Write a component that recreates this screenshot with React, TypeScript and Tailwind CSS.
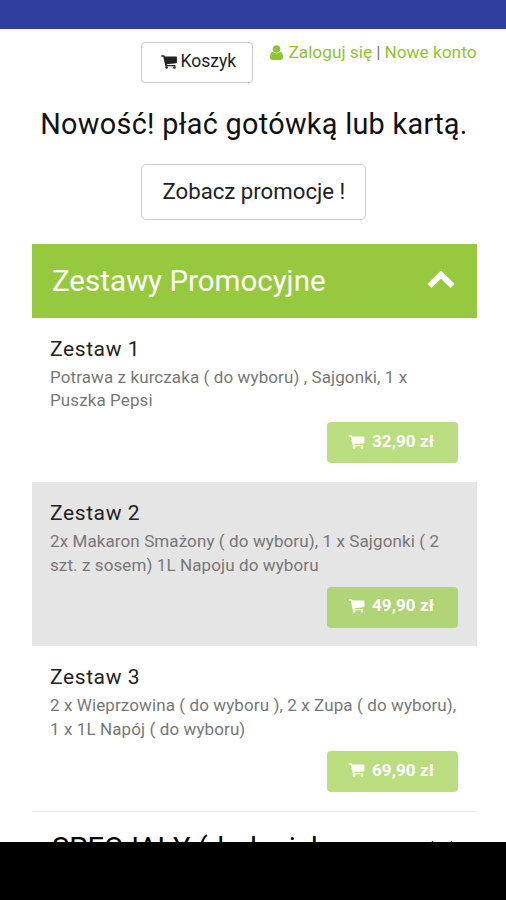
type MealSet = {
  name: string;
  lines: string[];
  price: string;
};

const sets: MealSet[] = [
  {
    name: 'Zestaw 1',
    lines: ['Potrawa z kurczaka ( do wyboru) , Sajgonki, 1 x', 'Puszka Pepsi'],
    price: '32,90 zł',
  },
  {
    name: 'Zestaw 2',
    lines: ['2x Makaron Smażony ( do wyboru), 1 x Sajgonki ( 2', 'szt. z sosem) 1L Napoju do wyboru'],
    price: '49,90 zł',
  },
  {
    name: 'Zestaw 3',
    lines: ['2 x Wieprzowina ( do wyboru ), 2 x Zupa ( do wyboru),', '1 x 1L Napój ( do wyboru)'],
    price: '69,90 zł',
  },
];

const CartIcon = ({ className }: { className: string }) => (
  <svg viewBox="0 0 17 15" fill="currentColor" className={className}>
    <path d="M0 1Q0 0.3 0.6 0.3H3.4L4.1 1.6H16.3Q17 1.6 17 2.4V8Q17 8.7 16.2 8.9L6.2 10L6.4 10.7H15.4V12H4.6L4.4 11L2.4 1.8H0.6Q0 1.8 0 1Z" />
    <circle cx="5.9" cy="13.4" r="1.4" />
    <circle cx="14.4" cy="13.4" r="1.4" />
  </svg>
);

const UserIcon = ({ className }: { className: string }) => (
  <svg viewBox="0 0 13 15" fill="currentColor" className={className}>
    <circle cx="6.5" cy="4" r="3.8" />
    <path d="M3 6.8C1 7.2 0 9 0 12.2C0 14 1 15 2.5 15H10.5C12 15 13 14 13 12.2C13 9 12 7.2 10 6.8C8 8.8 5 8.8 3 6.8Z" />
  </svg>
);

const Chevron = ({ className }: { className: string }) => (
  <svg viewBox="0 0 28 19" className={className} fill="none" stroke="currentColor" strokeWidth="5.8">
    <path d="M2.4 16 14 4.6 25.6 16" />
  </svg>
);

const SetRow = ({ item, shaded }: { item: MealSet; shaded: boolean }) => (
  <article className={`h-[164.2px] pl-[18.5px] pr-[18.5px] pt-[18px] ${shaded ? 'bg-[#e5e5e5]' : ''}`}>
    <h3 className="text-[21px] leading-[26px] tracking-[0.6px] text-[#222]">{item.name}</h3>
    <p className="mt-[4px] whitespace-nowrap text-[17px] leading-[23.5px] tracking-[0.1px] text-[#777]">
      {item.lines.map((line) => (
        <span key={line} className="block">{line}</span>
      ))}
    </p>
    <div className="mt-[9.4px] flex justify-end">
      <button
        className={`flex h-[41px] w-[131px] items-center rounded-[4px] pb-[2px] pl-[21px] text-[17px] font-bold tracking-[0.1px] text-white ${
          shaded ? 'bg-[#b0d576]' : 'bg-[#badd80]'
        }`}
      >
        <CartIcon className="mr-[7px] h-[14px] w-[17px]" />
        {item.price}
      </button>
    </div>
  </article>
);

const App = () => (
  <div className="flex h-[900px] w-[506px] flex-col overflow-hidden bg-white font-[Roboto,sans-serif] text-[#222]">
    <div className="h-[29px] shrink-0 bg-[#303f9f]" />

    <main className="min-h-0 flex-1 overflow-hidden pl-[31.5px] pr-[29.5px]">
      <header className="flex h-[54px] justify-end pt-[13px]">
        <button className="flex h-[41px] w-[112px] shrink-0 items-center justify-center rounded-[4px] border border-[#ccc] pb-[2px] pl-[2px] text-[17.5px]">
          <CartIcon className="mr-[4px] h-[14px] w-[16px]" />
          Koszyk
        </button>
        <div className="ml-[17px] flex h-[21px] items-center whitespace-nowrap text-[17.3px] text-[#8fc430]">
          <UserIcon className="mr-[5px] h-[15px] w-[13px]" />
          <a>Zaloguj się</a>
          <span className="mx-1 text-[#777]">|</span>
          <a>Nowe konto</a>
        </div>
      </header>

      <h1 className="-mx-4 mt-[20.5px] whitespace-nowrap text-center text-[28.8px] leading-[40px] tracking-[0.3px] text-[#111]">
        Nowość! płać gotówką lub kartą.
      </h1>

      <button className="ml-[109.9px] mt-[20.5px] flex h-[56px] w-[225px] items-center justify-center rounded-[5px] border border-[#ccc] pb-[1px] text-[22.2px]">
        Zobacz promocje !
      </button>

      <section className="mt-[24.4px]">
        <h2 className="flex h-[73.6px] items-center justify-between bg-[#96c93d] pl-[20.5px] pr-[21.5px] text-[29.5px] text-white">
          Zestawy Promocyjne
          <Chevron className="mb-[4px] h-[19px] w-[28px]" />
        </h2>
        {sets.map((item, i) => (
          <SetRow key={item.name} item={item} shaded={i === 1} />
        ))}
      </section>

      {/* next category, scrolled mostly behind the bottom bar */}
      <h2 className="flex justify-between whitespace-nowrap border-t border-[#eee] pl-[20.5px] pr-[21px] pt-[16px] text-[29px] leading-[40px] text-black">
        SPECJAŁY (dodanich
        <Chevron className="mt-[12px] h-[19px] w-[28px] rotate-180" />
      </h2>
    </main>

    <div className="h-[58px] shrink-0 bg-black" />
  </div>
);

export default App;
